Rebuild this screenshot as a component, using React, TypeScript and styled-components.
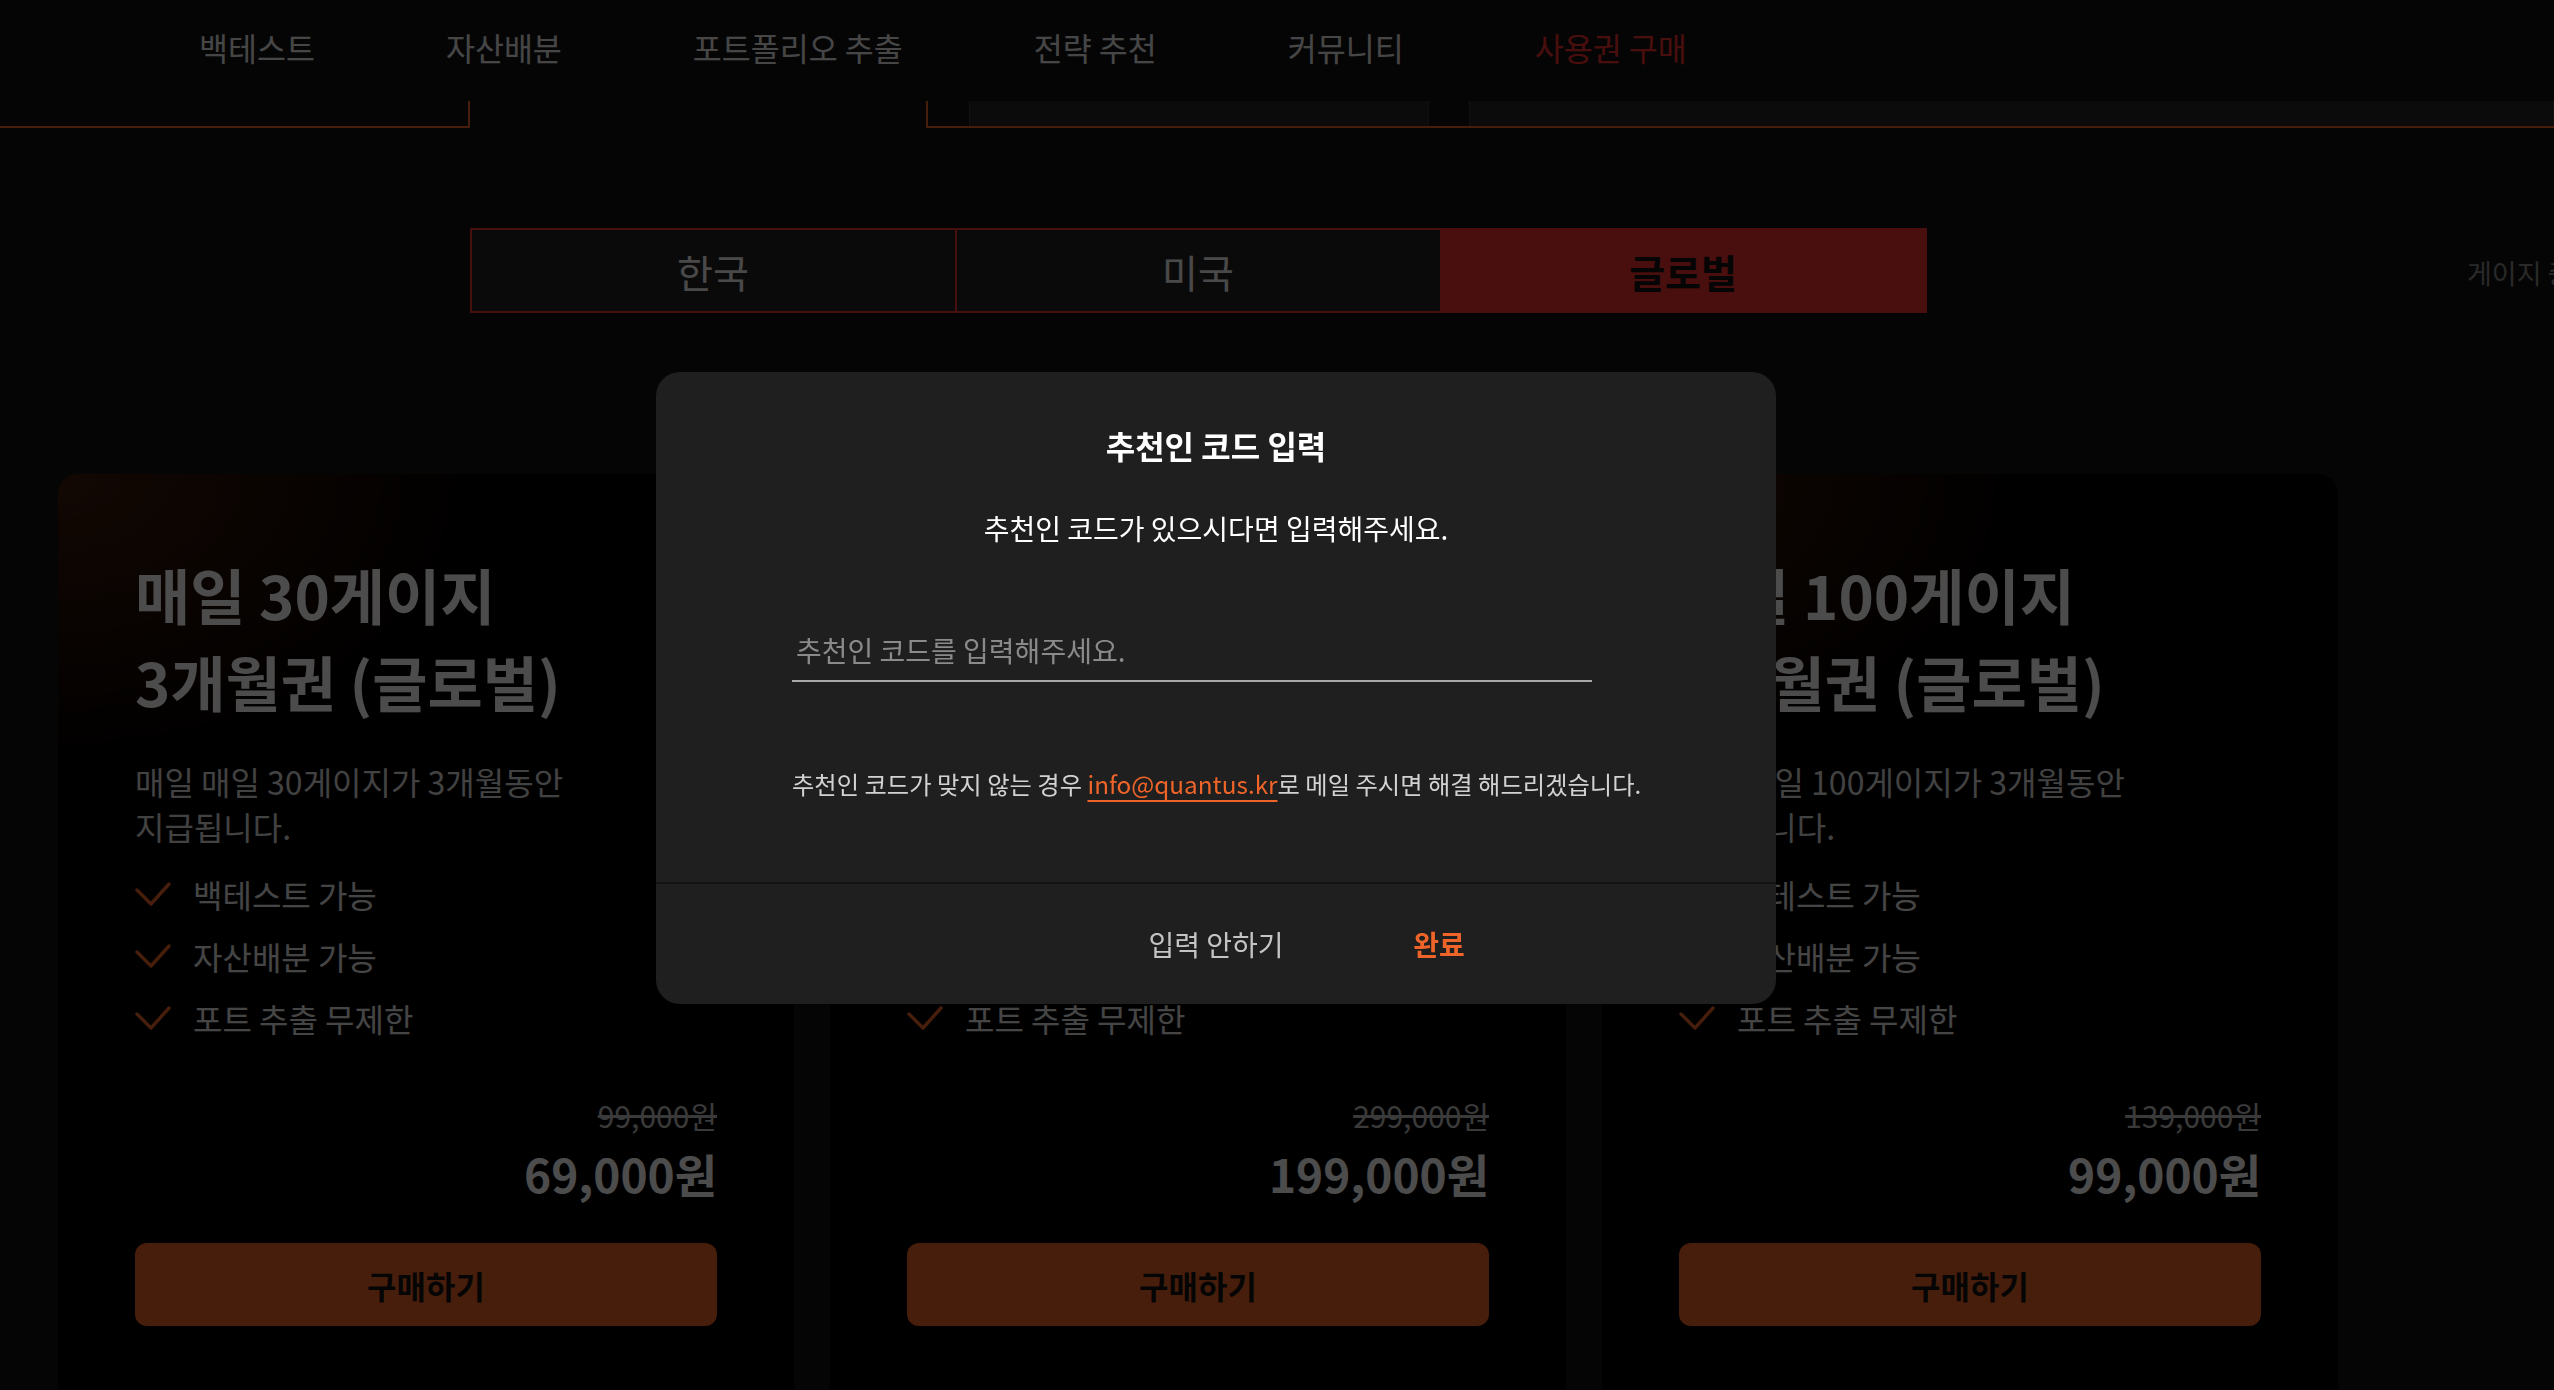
import React from 'react';
import styled, { createGlobalStyle } from 'styled-components';

const ORANGE = '#ee6429';
const RED = '#f52f2f';

const GlobalStyle = createGlobalStyle`
  html, body {
    margin: 0;
    padding: 0;
    background: #111;
    overflow: hidden;
  }
  body {
    font-family: 'Noto Sans CJK KR', 'Noto Sans', sans-serif;
    color: #fff;
  }
  * { box-sizing: border-box; }
`;

const Styled = {
  Page: styled.div`
    position: relative;
    width: 100%;
    height: 100vh;
    overflow: hidden;
    background: #111;
  `,
  Nav: styled.nav`
    display: flex;
    align-items: center;
    gap: 131px;
    height: 101px;
    padding: 0 0 7px 199px;
    background: #111;
  `,
  NavItem: styled.a<{ $active?: boolean }>`
    font-size: 31.5px;
    color: ${({ $active }) => ($active ? RED : '#ececec')};
    text-decoration: none;
    white-space: nowrap;
  `,
  SubBar: styled.div`
    display: flex;
    height: 27px;
  `,
  SubSeg: styled.div<{ $w?: number; $edge?: boolean; $line?: boolean }>`
    width: ${({ $w }) => ($w ? `${$w}px` : 'auto')};
    flex: ${({ $w }) => ($w ? 'none' : '1')};
    display: flex;
    background: #111;
    ${({ $edge }) => $edge && `border-right: 2px solid ${ORANGE};`}
    ${({ $line }) => $line && `border-bottom: 2px solid ${ORANGE};`}
  `,
  SubGroup: styled.div`
    flex: 1;
    display: flex;
    border-left: 2px solid ${ORANGE};
    border-bottom: 2px solid ${ORANGE};
  `,
  SubCell: styled.div<{ $w?: number; $light?: boolean }>`
    width: ${({ $w }) => ($w ? `${$w}px` : 'auto')};
    flex: ${({ $w }) => ($w ? 'none' : '1')};
    background: ${({ $light }) => ($light ? '#262626' : '#111')};
    border-right: 1px solid #3a3a3a;
  `,
  Main: styled.div`
    display: flex;
    padding: 100px 0 0 58px;
  `,
  Content: styled.main`
    width: 2280px;
    flex: none;
  `,
  Side: styled.aside`
    flex: none;
    margin-left: 129px;
    padding-top: 25px;
    font-size: 27px;
    line-height: 40px;
    color: #8a8a8a;
    white-space: nowrap;
  `,
  Tabs: styled.div`
    display: flex;
    width: 1457px;
    height: 85px;
    margin: 0 auto;
    border: 2px solid ${RED};
  `,
  Tab: styled.button<{ $active?: boolean }>`
    flex: 1;
    border: none;
    border-left: 2px solid ${RED};
    &:first-child { border-left: none; }
    background: ${({ $active }) => ($active ? RED : '#222')};
    color: ${({ $active }) => ($active ? '#111' : '#f4f4f4')};
    font-family: inherit;
    font-size: 39px;
    font-weight: ${({ $active }) => ($active ? 700 : 400)};
    cursor: pointer;
  `,
  Cards: styled.div`
    display: grid;
    grid-template-columns: repeat(3, 736px);
    gap: 36px;
    margin-top: 161px;
  `,
  Card: styled.section`
    min-height: 1000px;
    padding: 76px 77px;
    border-radius: 20px;
    background:
      radial-gradient(ellipse 440px 300px at 0 0, rgba(242, 102, 43, 0.26), rgba(242, 102, 43, 0) 100%),
      #000;
  `,
  Title: styled.h2`
    margin: 0;
    font-size: 60px;
    line-height: 87px;
    font-weight: 700;
    color: #fff;
  `,
  Desc: styled.p`
    margin: 35px 0 0;
    font-size: 32px;
    line-height: 45px;
    color: #dcdcdc;
  `,
  Features: styled.ul`
    list-style: none;
    margin: 24px 0 0;
    padding: 0;
    display: flex;
    flex-direction: column;
    gap: 20px;
  `,
  Feature: styled.li`
    display: flex;
    align-items: center;
    gap: 22px;
    font-size: 32px;
    line-height: 42px;
    color: #e6e6e6;
  `,
  Prices: styled.div`
    margin-top: 56px;
    text-align: right;
  `,
  OldPrice: styled.div`
    font-size: 30px;
    line-height: 40px;
    color: #c4c4c4;
    text-decoration: line-through;
  `,
  Price: styled.div`
    margin-top: 8px;
    font-size: 46px;
    line-height: 60px;
    font-weight: 700;
    color: #fff;
  `,
  BuyButton: styled.button`
    display: block;
    width: 100%;
    height: 83px;
    margin-top: 40px;
    border: none;
    border-radius: 12px;
    background: ${ORANGE};
    color: #111;
    font-family: inherit;
    font-size: 32px;
    font-weight: 700;
  `,
  Backdrop: styled.div`
    position: fixed;
    inset: 0;
    display: flex;
    align-items: center;
    justify-content: center;
    padding: 0 122px 15px 0;
    background: rgba(0, 0, 0, 0.7);
  `,
  Modal: styled.div`
    width: 1120px;
    border-radius: 24px;
    background: #1f1f1f;
    overflow: hidden;
  `,
  ModalBody: styled.div`
    padding: 53px 0 82px 136px;
  `,
  ModalTitle: styled.h3`
    margin: 0 0 0 -136px;
    text-align: center;
    font-size: 32px;
    line-height: 40px;
    font-weight: 700;
    color: #fff;
  `,
  ModalLead: styled.p`
    margin: 45px 0 0 -136px;
    text-align: center;
    font-size: 28px;
    line-height: 36px;
    color: #fff;
  `,
  CodeInput: styled.input`
    display: block;
    width: 800px;
    height: 62px;
    margin-top: 74px;
    padding: 0 4px;
    border: none;
    border-bottom: 2px solid #a8a8a8;
    background: transparent;
    color: #fff;
    font-family: inherit;
    font-size: 28px;
    outline: none;
    &::placeholder { color: #8a8a8a; }
  `,
  Help: styled.p`
    margin: 86px 0 0;
    font-size: 24.3px;
    line-height: 32px;
    color: #d2d2d2;
    white-space: nowrap;
  `,
  Mail: styled.a`
    color: ${ORANGE};
    text-decoration: underline;
    text-decoration-thickness: 2px;
    text-underline-offset: 6px;
  `,
  ModalFooter: styled.div`
    display: flex;
    justify-content: center;
    height: 122px;
    padding-left: 223px;
    border-top: 2px solid #121212;
  `,
  FooterButton: styled.button<{ $primary?: boolean }>`
    width: 223px;
    border: none;
    background: none;
    font-family: inherit;
    font-size: 28px;
    font-weight: ${({ $primary }) => ($primary ? 700 : 400)};
    color: ${({ $primary }) => ($primary ? ORANGE : '#c4c4c4')};
    cursor: pointer;
  `,
};

const CheckIcon = () => (
  <svg width="36" height="26" viewBox="0 0 36 26" fill="none">
    <path d="M2 9 L16 23 L34 3" stroke={ORANGE} strokeWidth="3.4" strokeLinecap="round" strokeLinejoin="round" />
  </svg>
);

const navItems = ['백테스트', '자산배분', '포트폴리오 추출', '전략 추천', '커뮤니티', '사용권 구매'];

const plans = [
  { gauge: 30, old: '99,000원', price: '69,000원' },
  { gauge: 50, old: '299,000원', price: '199,000원' },
  { gauge: 100, old: '139,000원', price: '99,000원' },
];

const features = ['백테스트 가능', '자산배분 가능', '포트 추출 무제한'];

const PlanCard = ({ gauge, old, price }: { gauge: number; old: string; price: string }) => (
  <Styled.Card>
    <Styled.Title>
      매일 {gauge}게이지
      <br />
      3개월권 (글로벌)
    </Styled.Title>
    <Styled.Desc>
      매일 매일 {gauge}게이지가 3개월동안
      <br />
      지급됩니다.
    </Styled.Desc>
    <Styled.Features>
      {features.map((f) => (
        <Styled.Feature key={f}>
          <CheckIcon />
          {f}
        </Styled.Feature>
      ))}
    </Styled.Features>
    <Styled.Prices>
      <Styled.OldPrice>{old}</Styled.OldPrice>
      <Styled.Price>{price}</Styled.Price>
    </Styled.Prices>
    <Styled.BuyButton>구매하기</Styled.BuyButton>
  </Styled.Card>
);

export default function App() {
  return (
    <Styled.Page>
      <GlobalStyle />
      <Styled.Nav>
        {navItems.map((item) => (
          <Styled.NavItem key={item} $active={item === '사용권 구매'}>
            {item}
          </Styled.NavItem>
        ))}
      </Styled.Nav>
      <Styled.SubBar>
        <Styled.SubSeg $w={470} $edge $line />
        <Styled.SubSeg $w={456} />
        <Styled.SubGroup>
          <Styled.SubCell $w={42} />
          <Styled.SubCell $w={459} $light />
          <Styled.SubCell $w={41} />
          <Styled.SubCell $light />
        </Styled.SubGroup>
      </Styled.SubBar>
      <Styled.Main>
        <Styled.Content>
          <Styled.Tabs>
            <Styled.Tab>한국</Styled.Tab>
            <Styled.Tab>미국</Styled.Tab>
            <Styled.Tab $active>글로벌</Styled.Tab>
          </Styled.Tabs>
          <Styled.Cards>
            {plans.map((p) => (
              <PlanCard key={p.gauge} {...p} />
            ))}
          </Styled.Cards>
        </Styled.Content>
        <Styled.Side>게이지 충전 안내</Styled.Side>
      </Styled.Main>
      <Styled.Backdrop>
        <Styled.Modal>
          <Styled.ModalBody>
            <Styled.ModalTitle>추천인 코드 입력</Styled.ModalTitle>
            <Styled.ModalLead>추천인 코드가 있으시다면 입력해주세요.</Styled.ModalLead>
            <Styled.CodeInput placeholder="추천인 코드를 입력해주세요." />
            <Styled.Help>
              추천인 코드가 맞지 않는 경우 <Styled.Mail href="mailto:info@quantus.kr">info@quantus.kr</Styled.Mail>로 메일
              주시면 해결 해드리겠습니다.
            </Styled.Help>
          </Styled.ModalBody>
          <Styled.ModalFooter>
            <Styled.FooterButton>입력 안하기</Styled.FooterButton>
            <Styled.FooterButton $primary>완료</Styled.FooterButton>
          </Styled.ModalFooter>
        </Styled.Modal>
      </Styled.Backdrop>
    </Styled.Page>
  );
}
